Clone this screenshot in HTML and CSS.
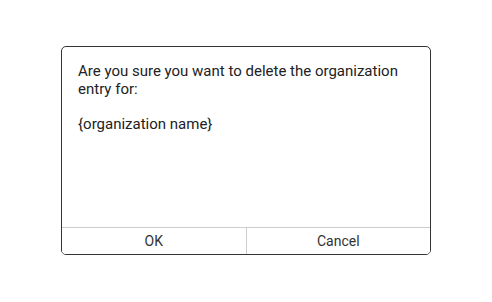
FILE: index.html
```html
<!DOCTYPE html>
<html lang="en">
<head>
    <meta charset="UTF-8">
    <meta name="viewport" content="width=device-width, initial-scale=1.0">
    <title>Delete organization</title>
    <link rel="stylesheet" href="styles.css">
</head>
<body>
    <div class="dialog">
        <div class="message">
            <p>Are you sure you want to delete the organization entry for:</p>
            <p>{organization name}</p>
        </div>
        <div class="actions">
            <button type="button" class="btn">OK</button>
            <button type="button" class="btn">Cancel</button>
        </div>
    </div>
</body>
</html>
```

FILE: styles.css
```css
body {
    font-family: Roboto, "Liberation Sans", sans-serif;
    background-color: #ffffff;
    margin: 0;
}
.dialog {
    width: 370px;
    height: 209px;
    margin: 46px auto 0 auto;
    box-sizing: border-box;
    border: 1px solid #333;
    border-radius: 5px;
    display: flex;
    flex-direction: column;
    overflow: hidden;
}
.message {
    flex: 1;
    padding: 16px 16px 0 16px;
    color: #222;
    font-size: 15px;
    line-height: 17.5px;
}
.message p {
    margin: 0 0 17.5px 0;
}
.actions {
    display: flex;
    height: 27px;
    box-sizing: border-box;
    border-top: 1px solid #ccc;
}
.btn {
    flex: 1;
    background: #fff;
    border: none;
    padding: 0;
    margin: 0;
    font-family: inherit;
    font-size: 14px;
    color: #333;
    cursor: pointer;
}
.btn + .btn {
    border-left: 1px solid #ccc;
}
```
